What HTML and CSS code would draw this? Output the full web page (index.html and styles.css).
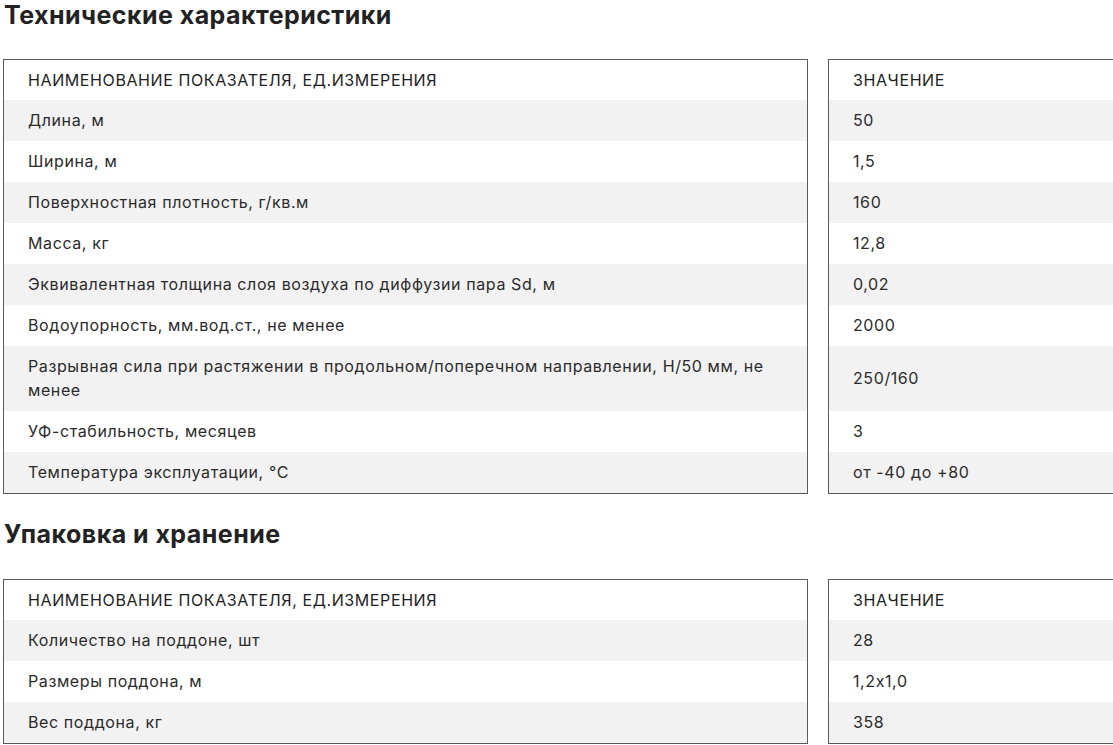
FILE: index.html
```html
<!DOCTYPE html>
<html lang="ru">
<head>
<meta charset="utf-8">
<title>Технические характеристики</title>
<link rel="stylesheet" href="styles.css">
</head>
<body>
<main class="page">
  <h2 class="title title-first">Технические характеристики</h2>
  <table class="spec">
    <thead>
      <tr><th class="name">НАИМЕНОВАНИЕ ПОКАЗАТЕЛЯ, ЕД.ИЗМЕРЕНИЯ</th><th class="gap"></th><th class="value">ЗНАЧЕНИЕ</th></tr>
    </thead>
    <tbody>
      <tr><td class="name">Длина, м</td><td class="gap"></td><td class="value">50</td></tr>
      <tr><td class="name">Ширина, м</td><td class="gap"></td><td class="value">1,5</td></tr>
      <tr><td class="name">Поверхностная плотность, г/кв.м</td><td class="gap"></td><td class="value">160</td></tr>
      <tr><td class="name">Масса, кг</td><td class="gap"></td><td class="value">12,8</td></tr>
      <tr><td class="name">Эквивалентная толщина слоя воздуха по диффузии пара Sd, м</td><td class="gap"></td><td class="value">0,02</td></tr>
      <tr><td class="name">Водоупорность, мм.вод.ст., не менее</td><td class="gap"></td><td class="value">2000</td></tr>
      <tr><td class="name">Разрывная сила при растяжении в продольном/поперечном направлении, Н/50 мм, не менее</td><td class="gap"></td><td class="value">250/160</td></tr>
      <tr><td class="name">УФ-стабильность, месяцев</td><td class="gap"></td><td class="value">3</td></tr>
      <tr><td class="name">Температура эксплуатации, °С</td><td class="gap"></td><td class="value">от -40 до +80</td></tr>
    </tbody>
  </table>

  <h2 class="title title-second">Упаковка и хранение</h2>
  <table class="spec">
    <thead>
      <tr><th class="name">НАИМЕНОВАНИЕ ПОКАЗАТЕЛЯ, ЕД.ИЗМЕРЕНИЯ</th><th class="gap"></th><th class="value">ЗНАЧЕНИЕ</th></tr>
    </thead>
    <tbody>
      <tr><td class="name">Количество на поддоне, шт</td><td class="gap"></td><td class="value">28</td></tr>
      <tr><td class="name">Размеры поддона, м</td><td class="gap"></td><td class="value">1,2x1,0</td></tr>
      <tr><td class="name">Вес поддона, кг</td><td class="gap"></td><td class="value">358</td></tr>
    </tbody>
  </table>
</main>
</body>
</html>
```

FILE: styles.css
```css
html {
  overflow-x: hidden;
}
body {
  margin: 0;
  background: #ffffff;
  color: #2b2b2b;
  font-family: Inter, "Open Sans", "DejaVu Sans", sans-serif;
  font-feature-settings: "calt" 0;
}
.page {
  padding-left: 3px;
  width: 1300px;
}
.title {
  margin: 0;
  padding-left: 1px;
  font-size: 25px;
  line-height: 30px;
  letter-spacing: 0.45px;
  font-weight: 700;
  color: #222222;
}
.title-first {
  margin-bottom: 29px;
}
.title-second {
  margin-top: 25px;
  margin-bottom: 30px;
}
.spec {
  border-collapse: separate;
  border-spacing: 0;
  table-layout: fixed;
  width: 1200px;
  font-size: 16px;
  line-height: 24px;
  letter-spacing: 0.6px;
}
.spec th,
.spec td {
  padding: 8px 24px 9px;
  text-align: left;
  vertical-align: middle;
  font-weight: 400;
}
.spec th {
  padding-top: 8px;
  padding-bottom: 8px;
  border-top: 1px solid #5a5a5a;
  color: #1e1e1e;
}
.spec tbody tr:last-child td {
  border-bottom: 1px solid #5a5a5a;
}
.spec .name {
  width: 805px;
  box-sizing: border-box;
  border-left: 1px solid #5a5a5a;
  border-right: 1px solid #5a5a5a;
}
.spec .gap {
  width: 20px;
  padding: 0;
  border-top: none;
  border-bottom: none !important;
  background: #ffffff !important;
}
.spec .value {
  border-left: 1px solid #5a5a5a;
}
.spec tbody tr:nth-child(odd) td {
  background: #f2f2f2;
}
```
